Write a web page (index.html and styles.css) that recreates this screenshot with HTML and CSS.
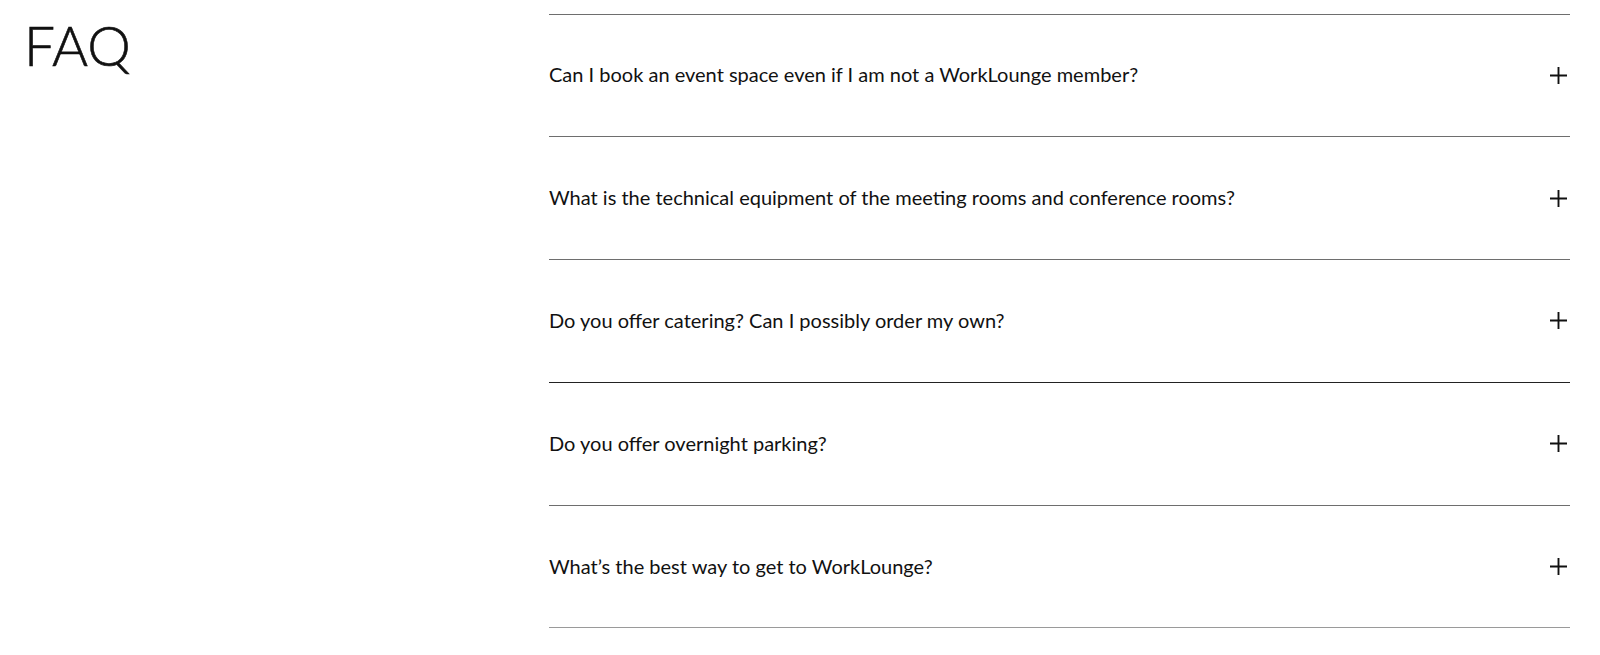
FILE: index.html
```html
<!DOCTYPE html>
<html lang="en">
<head>
<meta charset="utf-8">
<title>FAQ</title>
<link rel="stylesheet" href="styles.css">
</head>
<body>
<section class="faq">
  <h2 class="faq-title">FAQ</h2>
  <div class="faq-list">
    <div class="faq-item"><span class="faq-q">Can I book an event space even if I am not a WorkLounge member?</span><svg class="plus" viewBox="0 0 18 18"><path d="M9 0V18M0 9H18"/></svg></div>
    <div class="faq-item"><span class="faq-q">What is the technical equipment of the meeting rooms and conference rooms?</span><svg class="plus" viewBox="0 0 18 18"><path d="M9 0V18M0 9H18"/></svg></div>
    <div class="faq-item"><span class="faq-q">Do you offer catering? Can I possibly order my own?</span><svg class="plus" viewBox="0 0 18 18"><path d="M9 0V18M0 9H18"/></svg></div>
    <div class="faq-item faq-item-dark"><span class="faq-q">Do you offer overnight parking?</span><svg class="plus" viewBox="0 0 18 18"><path d="M9 0V18M0 9H18"/></svg></div>
    <div class="faq-item"><span class="faq-q">What’s the best way to get to WorkLounge?</span><svg class="plus" viewBox="0 0 18 18"><path d="M9 0V18M0 9H18"/></svg></div>
  </div>
</section>
</body>
</html>
```
FILE: styles.css
```css
html, body {
  margin: 0;
  padding: 0;
  background: #fff;
}
body {
  font-family: "Lato", "Noto Sans", sans-serif;
  color: #111;
}
.faq {
  display: flex;
  padding: 13.5px 30px 0 24px;
}
.faq-title {
  width: 525px;
  flex: none;
  margin: 0;
  font-size: 55px;
  font-weight: 300;
  line-height: 1;
  padding-top: 4px;
  color: #111;
  -webkit-text-stroke: 0.6px #111;
}
.faq-list {
  flex: 1;
}
.faq-item {
  display: flex;
  align-items: center;
  justify-content: space-between;
  min-height: 121.8px;
  border-top: 1px solid #6e6e6e;
}
.faq-item-dark {
  border-top-color: #222;
}
.faq-item:last-child {
  border-bottom: 1px solid #9a9a9a;
}
.faq-q {
  font-size: 20px;
  letter-spacing: 0;
  margin-top: -2px;
}
.plus {
  width: 17px;
  height: 17px;
  margin-right: 3px;
  stroke: #111;
  stroke-width: 2;
  fill: none;
}
```
